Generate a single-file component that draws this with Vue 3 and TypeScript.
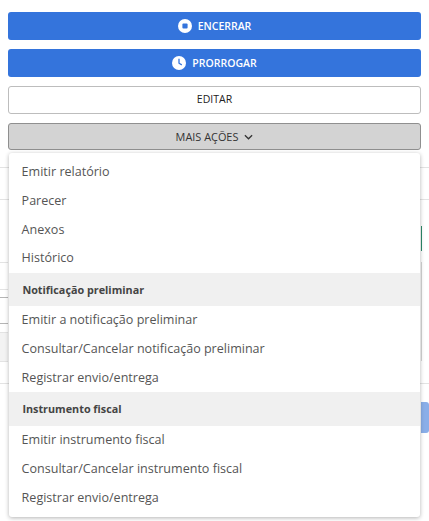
<script setup lang="ts">
interface MenuRow { label: string; header?: boolean }
const rows: MenuRow[] = [
  { label: 'Emitir relatório' },
  { label: 'Parecer' },
  { label: 'Anexos' },
  { label: 'Histórico' },
  { label: 'Notificação preliminar', header: true },
  { label: 'Emitir a notificação preliminar' },
  { label: 'Consultar/Cancelar notificação preliminar' },
  { label: 'Registrar envio/entrega' },
  { label: 'Instrumento fiscal', header: true },
  { label: 'Emitir instrumento fiscal' },
  { label: 'Consultar/Cancelar instrumento fiscal' },
  { label: 'Registrar envio/entrega' },
]
</script>

<template>
  <div class="page">
    <div class="actions">
      <button class="btn primary">
        <svg class="ico" viewBox="0 0 14 14"><circle cx="7" cy="7" r="7" fill="#fff" /><rect x="4.4" y="4.4" width="5.2" height="5.2" rx="1" fill="#3474dc" /></svg>
        ENCERRAR
      </button>
      <button class="btn primary">
        <svg class="ico" viewBox="0 0 14 14"><circle cx="7" cy="7" r="7" fill="#fff" /><path d="M7 2.8v4.4l2.8 1.7" fill="none" stroke="#3474dc" stroke-width="1.3" /></svg>
        PRORROGAR
      </button>
      <button class="btn outline">EDITAR</button>
      <div class="more-wrap">
        <button class="btn more">
          MAIS AÇÕES
          <svg class="chev" viewBox="0 0 10 6"><path d="M1 1l4 4 4-4" fill="none" stroke="#333" stroke-width="1.4" /></svg>
        </button>
        <ul class="menu">
          <li v-for="(r, i) in rows" :key="i" :class="r.header ? 'hdr' : 'item'">{{ r.label }}</li>
        </ul>
      </div>
    </div>
    <div class="behind">
      <div class="ln h32"></div>
      <div class="ln h63"></div>
      <div class="ln h27 short"></div>
      <div class="ln h8 short"></div>
      <div class="ln h26 short dark"></div>
      <div class="ln h9 short dark"></div>
      <div class="ln h29 short shaded"></div>
      <div class="ln h22 short"></div>
      <div class="ln last"></div>
    </div>
    <div class="side-green"></div>
    <div class="side-gray"></div>
    <div class="side-blue"></div>
  </div>
</template>

<style>
html, body { margin: 0; background: #fff; }
</style>

<style scoped>
.page { position: relative; width: 429px; height: 521px; overflow: hidden; background: #fff; font-family: "Open Sans", sans-serif; }
.actions { position: relative; z-index: 2; display: flex; flex-direction: column; gap: 9px; padding: 12px 8px 0; }
.btn { display: flex; align-items: center; justify-content: center; width: 100%; height: 28px; margin: 0; padding: 0; box-sizing: border-box; border-radius: 3px; font-family: inherit; font-size: 10.5px; font-weight: 400; }
.primary { background: #3474dc; border: 0; color: #fff; font-weight: 600; }
.outline { background: #fff; border: 1px solid #bdbdbd; color: #222; padding-bottom: 2px; }
.more { background: #d3d3d3; border: 1px solid #8f8f8f; color: #333; height: 27px; font-size: 10.9px; }
.ico { width: 14px; height: 14px; margin-right: 6px; }
.chev { width: 9px; height: 6px; margin-left: 6px; }
.more-wrap { position: relative; }
.menu { position: absolute; top: 30px; left: 1px; width: 411px; margin: 0; padding: 4.4px 0 5px; box-sizing: border-box; list-style: none; background: #fff; border-radius: 3px; box-shadow: 0 1px 4px rgba(0,0,0,.3); }
.item { box-sizing: border-box; height: 28.8px; padding-top: 0.6px; line-height: 28px; padding-left: 12.6px; font-size: 12.56px; color: #555; }
.hdr { height: 33.3px; line-height: 33.3px; padding-left: 13.4px; background: #f0f0f0; font-size: 10.8px; font-weight: 700; color: #444; }
.behind { position: absolute; top: 167px; left: 0; width: 429px; }
.ln { border-top: 1px solid #e3e3e3; box-sizing: border-box; }
.short { width: 8px; }
.dark { border-top-color: #b5b5b5; }
.shaded { background: #f3f3f3; }
.h32 { height: 32px; }
.h63 { height: 63px; }
.h27 { height: 27px; }
.h8 { height: 8px; }
.h26 { height: 26px; }
.h9 { height: 9px; }
.h29 { height: 29px; }
.h22 { height: 22px; }
.side-green { position: absolute; left: 421px; top: 226px; width: 1px; height: 25px; background: #2e8b6b; }
.side-gray { position: absolute; left: 421px; top: 262px; width: 1px; height: 99px; background: #d5d5d5; }
.side-blue { position: absolute; left: 421px; top: 402px; width: 8px; height: 31px; background: #8aaee8; border-radius: 0 3px 3px 0; }
</style>
